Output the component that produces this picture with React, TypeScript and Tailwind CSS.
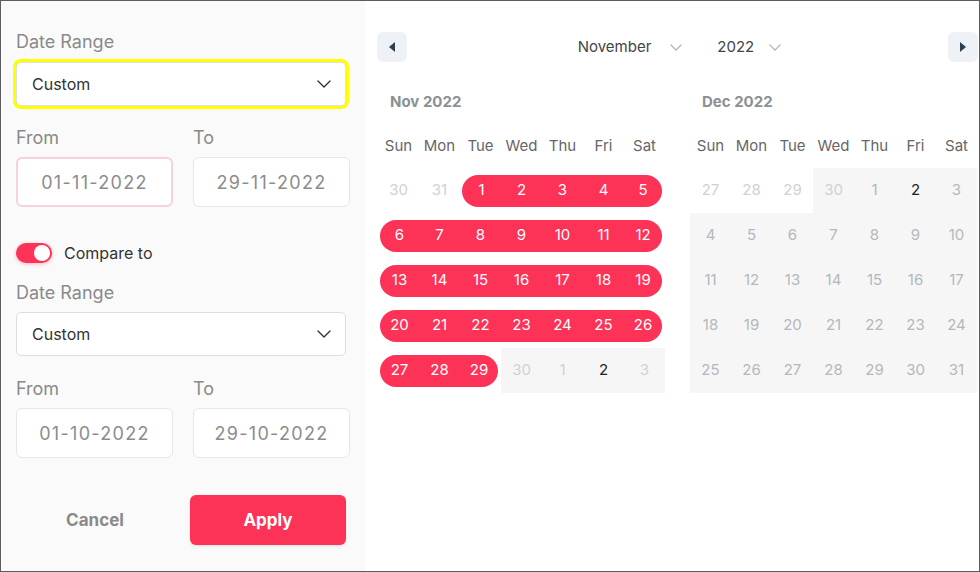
import { ReactNode } from 'react';

type Cell = { n: number; bg?: 'r' | 'g'; tone: 'white' | 'light' | 'mid' | 'dark'; start?: boolean; end?: boolean };

const WEEKDAYS = ['Sun', 'Mon', 'Tue', 'Wed', 'Thu', 'Fri', 'Sat'];

// Nov 2022 view: 1-29 selected, rest of month greyed
const nov: Cell[][] = [
  [
    { n: 30, tone: 'light' },
    { n: 31, tone: 'light' },
    { n: 1, bg: 'r', tone: 'white', start: true },
    { n: 2, bg: 'r', tone: 'white' },
    { n: 3, bg: 'r', tone: 'white' },
    { n: 4, bg: 'r', tone: 'white' },
    { n: 5, bg: 'r', tone: 'white', end: true },
  ],
  ...[6, 13, 20].map((s) =>
    Array.from({ length: 7 }, (_, i): Cell => ({ n: s + i, bg: 'r', tone: 'white', start: i === 0, end: i === 6 }))
  ),
  [
    { n: 27, bg: 'r', tone: 'white', start: true },
    { n: 28, bg: 'r', tone: 'white' },
    { n: 29, bg: 'r', tone: 'white', end: true },
    { n: 30, bg: 'g', tone: 'light' },
    { n: 1, bg: 'g', tone: 'light' },
    { n: 2, bg: 'g', tone: 'dark' },
    { n: 3, bg: 'g', tone: 'light' },
  ],
];

const dec: Cell[][] = [
  [
    { n: 27, tone: 'light' },
    { n: 28, tone: 'light' },
    { n: 29, tone: 'light' },
    { n: 30, bg: 'g', tone: 'light' },
    { n: 1, bg: 'g', tone: 'mid' },
    { n: 2, bg: 'g', tone: 'dark' },
    { n: 3, bg: 'g', tone: 'mid' },
  ],
  ...[4, 11, 18, 25].map((s) => Array.from({ length: 7 }, (_, i): Cell => ({ n: s + i, bg: 'g', tone: 'mid' }))),
];

const toneClass = {
  white: 'text-white',
  light: 'text-[#cdd2d7]',
  mid: 'text-[#b3b8bd]',
  dark: 'text-[#222]',
};

function Chevron({ className }: { className?: string }) {
  return (
    <svg width="14" height="8" viewBox="0 0 14 8" fill="none" className={className}>
      <polyline points="1,1 7,7 13,1" stroke="currentColor" strokeWidth="1.4" strokeLinecap="round" strokeLinejoin="round" />
    </svg>
  );
}

function Label({ children }: { children: ReactNode }) {
  return <div className="text-[18px] leading-[24px] text-[#8a8a8a]">{children}</div>;
}

function Select({ focused }: { focused?: boolean }) {
  return (
    <div
      className={
        'flex h-[44px] w-[330px] items-center justify-between rounded-[5px] border bg-white pl-[15px] pr-[14px] text-[16px] text-[#333] ' +
        (focused ? 'border-[#e0e0e0] ring-[3px] ring-[#ffff00]' : 'border-[#dedede]')
      }
    >
      <span>Custom</span>
      <Chevron className="text-[#333]" />
    </div>
  );
}

function DateInput({ value, focused }: { value: string; focused?: boolean }) {
  return (
    <div
      className={
        'flex h-[50px] w-[157px] items-center justify-center rounded-[6px] bg-white text-[18px] tracking-[1.3px] text-[#8c8c8c] ' +
        (focused ? 'border-2 border-[#f6d3da]' : 'border border-[#e5e7eb]')
      }
    >
      {value}
    </div>
  );
}

function FromTo({ from, to, focused }: { from: string; to: string; focused?: boolean }) {
  return (
    <div className="flex gap-[20px]">
      <div className="flex flex-col gap-[7px]">
        <Label>From</Label>
        <DateInput value={from} focused={focused} />
      </div>
      <div className="flex flex-col gap-[7px]">
        <Label>To</Label>
        <DateInput value={to} />
      </div>
    </div>
  );
}

function Month({ title, weeks }: { title: string; weeks: Cell[][] }) {
  return (
    <div className="w-[287px]">
      <div className="pl-[12px] text-[15px] font-bold leading-[20px] text-[#8b9095]">{title}</div>
      <div className="mt-[13px] grid h-[43px] grid-cols-7 items-center">
        {WEEKDAYS.map((d) => (
          <div key={d} className="text-center text-[15px] text-[#666]">
            {d}
          </div>
        ))}
      </div>
      {weeks.map((row, ri) => (
        <div key={ri} className="grid grid-cols-7">
          {row.map((c, ci) => (
            <div
              key={ci}
              className={'flex h-[45px] w-[41px] items-center ' + (c.bg === 'g' ? 'bg-[#f6f6f6]' : '')}
            >
              <div
                className={
                  'flex h-[32px] flex-1 items-center justify-center text-[15px] ' +
                  toneClass[c.tone] +
                  (c.bg === 'r' ? ' bg-[#fd3257]' : '') +
                  (c.start ? ' ml-[2px] rounded-l-full' : '') +
                  (c.end ? ' mr-[3px] rounded-r-full' : '')
                }
              >
                {c.n}
              </div>
            </div>
          ))}
        </div>
      ))}
    </div>
  );
}

function NavButton({ dir }: { dir: 'prev' | 'next' }) {
  return (
    <div className="flex h-[30px] w-[30px] items-center justify-center rounded-[6px] bg-[#eef1f6]">
      <svg width="8" height="10" viewBox="0 0 8 10">
        {dir === 'prev' ? <polygon points="7,0 7,10 1,5" fill="#2d3e50" /> : <polygon points="1,0 1,10 7,5" fill="#2d3e50" />}
      </svg>
    </div>
  );
}

export default function App() {
  return (
    <div
      className="box-border flex h-[572px] w-[980px] overflow-hidden border border-[#5c5c5c] bg-white"
      style={{ fontFamily: 'Inter, "Noto Sans", sans-serif' }}
    >
      {/* Left: form */}
      <div className="flex w-[364px] shrink-0 flex-col bg-[#fafafa] pl-[15px] pt-[29px]">
        <Label>Date Range</Label>
        <div className="mt-[8px]">
          <Select focused />
        </div>
        <div className="mt-[20px]">
          <FromTo from="01-11-2022" to="29-11-2022" focused />
        </div>

        <div className="mt-[36px] flex h-[20px] items-center gap-[12px]">
          <div className="flex h-[20px] w-[36px] items-center justify-end rounded-full bg-[#fd3257] pr-[2px] shadow-[0_1px_4px_rgba(253,50,87,0.35)]">
            <div className="h-[16px] w-[16px] rounded-full bg-white" />
          </div>
          <span className="text-[16px] text-[#333]">Compare to</span>
        </div>

        <div className="mt-[18px]">
          <Label>Date Range</Label>
        </div>
        <div className="mt-[7px]">
          <Select />
        </div>
        <div className="mt-[21px]">
          <FromTo from="01-10-2022" to="29-10-2022" />
        </div>

        <div className="mt-[37px] flex w-[330px] items-center justify-between">
          <button className="h-[50px] w-[158px] pt-[2px] text-[17px] font-bold text-[#8a8a8a]">Cancel</button>
          <button className="h-[50px] w-[156px] rounded-[6px] bg-[#fd3257] pt-[2px] text-[17px] font-bold text-white shadow-[0_1px_3px_rgba(0,0,0,0.12)]">
            Apply
          </button>
        </div>
      </div>

      {/* Right: calendars */}
      <div className="flex flex-1 flex-col pl-[12px] pr-[1px] pt-[31px]">
        <div className="flex h-[30px] items-center justify-between">
          <NavButton dir="prev" />
          <div className="ml-[4px] flex items-center text-[15px] text-[#444]">
            <span>November</span>
            <Chevron className="ml-[19px] h-[7px] w-[12px] text-[#aaa]" />
            <span className="ml-[35px]">2022</span>
            <Chevron className="ml-[15px] h-[7px] w-[12px] text-[#aaa]" />
          </div>
          <NavButton dir="next" />
        </div>
        <div className="ml-[1px] mt-[30px] flex gap-[25px]">
          <Month title="Nov 2022" weeks={nov} />
          <Month title="Dec 2022" weeks={dec} />
        </div>
      </div>
    </div>
  );
}
